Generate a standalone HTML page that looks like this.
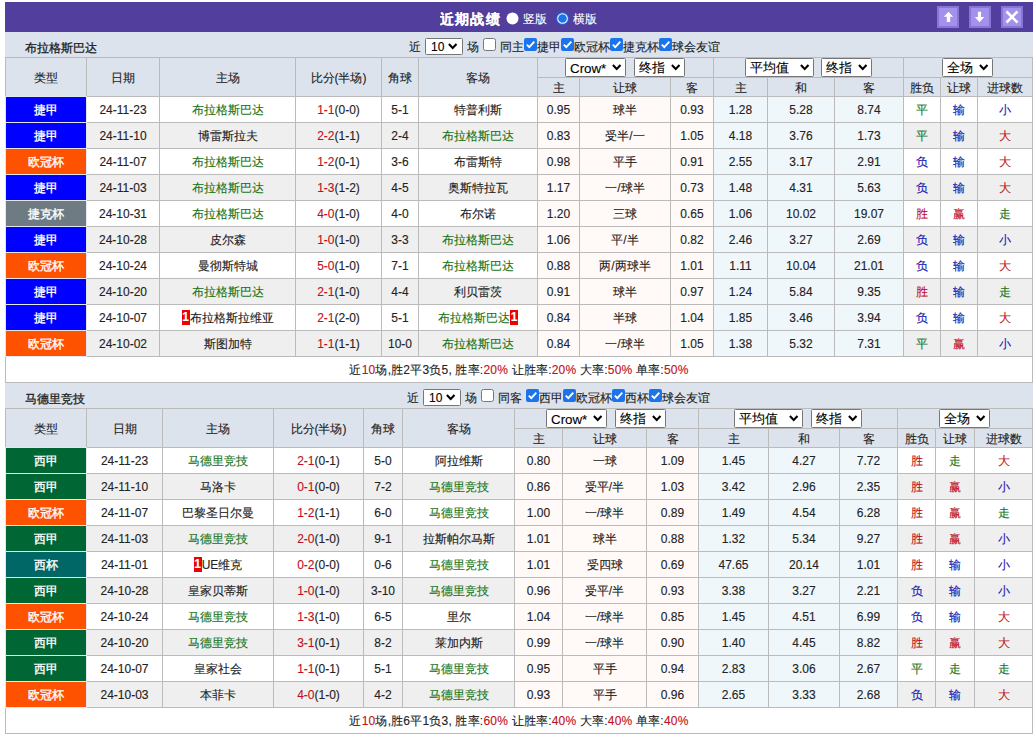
<!DOCTYPE html>
<html><head><meta charset="utf-8"><style>
html,body{margin:0;padding:0;background:#fff;width:1035px;height:734px;overflow:hidden}
body{font-family:"Liberation Sans",sans-serif;font-size:12px;position:relative;-webkit-text-stroke:0.12px}
div{position:absolute;box-sizing:border-box;white-space:nowrap;overflow:hidden}
svg{display:block}
.rc{display:inline-block;background:#e00;color:#fff;font-weight:bold;width:8px;text-align:center;line-height:15px;vertical-align:middle;position:relative;top:-1px}
</style></head><body>
<div style="left:5px;top:2px;width:1028px;height:30px;background:#523f9d"></div>
<div style="left:440px;top:4px;width:90px;height:30px;line-height:30px;font-size:14px;font-weight:bold;color:#fff;letter-spacing:1.2px">近期战绩</div>
<div style="left:506px;top:12px;width:13px;height:13px;"><svg width="13" height="13" viewBox="0 0 13 13"><circle cx="6.5" cy="6.5" r="6" fill="#fff"/></svg></div>
<div style="left:523px;top:4px;width:30px;height:30px;line-height:30px;color:#fff">竖版</div>
<div style="left:556px;top:12px;width:13px;height:13px;"><svg width="13" height="13" viewBox="0 0 13 13"><circle cx="6.5" cy="6.5" r="6.2" fill="#1c74ec"/><circle cx="6.5" cy="6.5" r="5.3" fill="#fff"/><circle cx="6.5" cy="6.5" r="4.3" fill="#1c74ec"/></svg></div>
<div style="left:573px;top:4px;width:30px;height:30px;line-height:30px;color:#fff">横版</div>
<div style="left:937px;top:6px;width:22px;height:22px;"><svg width="22" height="22" viewBox="0 0 22 22"><rect x="0" y="0" width="22" height="22" fill="#8776d6"/><rect x="2" y="2" width="18" height="18" fill="#a391ec"/><path d="M11.5 5.8 L16.2 10.8 L13.2 10.8 L13.2 16 L9.8 16 L9.8 10.8 L6.8 10.8 Z" fill="#fff"/></svg></div>
<div style="left:969px;top:6px;width:22px;height:22px;"><svg width="22" height="22" viewBox="0 0 22 22"><rect x="0" y="0" width="22" height="22" fill="#8776d6"/><rect x="2" y="2" width="18" height="18" fill="#a391ec"/><path d="M10.5 16.2 L15.3 11 L12.1 11 L12.1 5.8 L8.9 5.8 L8.9 11 L5.8 11 Z" fill="#fff"/></svg></div>
<div style="left:1001px;top:6px;width:22px;height:22px;"><svg width="22" height="22" viewBox="0 0 22 22"><rect x="0" y="0" width="22" height="22" fill="#8776d6"/><rect x="2" y="2" width="18" height="18" fill="#a391ec"/><path d="M5.5 5.5 L16.5 16.5 M16.5 5.5 L5.5 16.5" stroke="#fff" stroke-width="2.5"/></svg></div>
<div style="left:5px;top:32px;width:1028px;height:25px;background:#dce3ed"></div>
<div style="left:25px;top:36px;width:200px;height:25px;line-height:25px;font-weight:500;-webkit-text-stroke:0.3px;color:#222">布拉格斯巴达</div>
<div style="left:5px;top:383px;width:1028px;height:25px;background:#dce3ed"></div>
<div style="left:25px;top:387px;width:200px;height:25px;line-height:25px;font-weight:500;-webkit-text-stroke:0.3px;color:#222">马德里竞技</div>
<div style="left:5px;top:57px;width:1028px;height:39px;background:#dce3ed"></div>
<div style="left:5px;top:97px;width:1028px;height:25px;background:#fff"></div>
<div style="left:538px;top:97px;width:176px;height:25px;background:#fffaf7"></div>
<div style="left:714px;top:97px;width:190px;height:25px;background:#f0f7fb"></div>
<div style="left:5px;top:123px;width:1028px;height:25px;background:#efefef"></div>
<div style="left:538px;top:123px;width:176px;height:25px;background:#fffaf7"></div>
<div style="left:714px;top:123px;width:190px;height:25px;background:#f0f7fb"></div>
<div style="left:5px;top:149px;width:1028px;height:25px;background:#fff"></div>
<div style="left:538px;top:149px;width:176px;height:25px;background:#fffaf7"></div>
<div style="left:714px;top:149px;width:190px;height:25px;background:#f0f7fb"></div>
<div style="left:5px;top:175px;width:1028px;height:25px;background:#efefef"></div>
<div style="left:538px;top:175px;width:176px;height:25px;background:#fffaf7"></div>
<div style="left:714px;top:175px;width:190px;height:25px;background:#f0f7fb"></div>
<div style="left:5px;top:201px;width:1028px;height:25px;background:#fff"></div>
<div style="left:538px;top:201px;width:176px;height:25px;background:#fffaf7"></div>
<div style="left:714px;top:201px;width:190px;height:25px;background:#f0f7fb"></div>
<div style="left:5px;top:227px;width:1028px;height:25px;background:#efefef"></div>
<div style="left:538px;top:227px;width:176px;height:25px;background:#fffaf7"></div>
<div style="left:714px;top:227px;width:190px;height:25px;background:#f0f7fb"></div>
<div style="left:5px;top:253px;width:1028px;height:25px;background:#fff"></div>
<div style="left:538px;top:253px;width:176px;height:25px;background:#fffaf7"></div>
<div style="left:714px;top:253px;width:190px;height:25px;background:#f0f7fb"></div>
<div style="left:5px;top:279px;width:1028px;height:25px;background:#efefef"></div>
<div style="left:538px;top:279px;width:176px;height:25px;background:#fffaf7"></div>
<div style="left:714px;top:279px;width:190px;height:25px;background:#f0f7fb"></div>
<div style="left:5px;top:305px;width:1028px;height:25px;background:#fff"></div>
<div style="left:538px;top:305px;width:176px;height:25px;background:#fffaf7"></div>
<div style="left:714px;top:305px;width:190px;height:25px;background:#f0f7fb"></div>
<div style="left:5px;top:331px;width:1028px;height:25px;background:#efefef"></div>
<div style="left:538px;top:331px;width:176px;height:25px;background:#fffaf7"></div>
<div style="left:714px;top:331px;width:190px;height:25px;background:#f0f7fb"></div>
<div style="left:5px;top:57px;width:1028px;height:1px;background:#bbbbbb"></div>
<div style="left:537px;top:77px;width:495px;height:1px;background:#bbbbbb"></div>
<div style="left:5px;top:96px;width:1028px;height:1px;background:#bbbbbb"></div>
<div style="left:5px;top:122px;width:1028px;height:1px;background:#bbbbbb"></div>
<div style="left:5px;top:148px;width:1028px;height:1px;background:#bbbbbb"></div>
<div style="left:5px;top:174px;width:1028px;height:1px;background:#bbbbbb"></div>
<div style="left:5px;top:200px;width:1028px;height:1px;background:#bbbbbb"></div>
<div style="left:5px;top:226px;width:1028px;height:1px;background:#bbbbbb"></div>
<div style="left:5px;top:252px;width:1028px;height:1px;background:#bbbbbb"></div>
<div style="left:5px;top:278px;width:1028px;height:1px;background:#bbbbbb"></div>
<div style="left:5px;top:304px;width:1028px;height:1px;background:#bbbbbb"></div>
<div style="left:5px;top:330px;width:1028px;height:1px;background:#bbbbbb"></div>
<div style="left:5px;top:356px;width:1028px;height:1px;background:#bbbbbb"></div>
<div style="left:5px;top:382px;width:1028px;height:1px;background:#bbbbbb"></div>
<div style="left:5px;top:57px;width:1px;height:326px;background:#bbbbbb"></div>
<div style="left:86px;top:57px;width:1px;height:299px;background:#bbbbbb"></div>
<div style="left:159px;top:57px;width:1px;height:299px;background:#bbbbbb"></div>
<div style="left:295px;top:57px;width:1px;height:299px;background:#bbbbbb"></div>
<div style="left:381px;top:57px;width:1px;height:299px;background:#bbbbbb"></div>
<div style="left:418px;top:57px;width:1px;height:299px;background:#bbbbbb"></div>
<div style="left:537px;top:57px;width:1px;height:299px;background:#bbbbbb"></div>
<div style="left:579px;top:77px;width:1px;height:279px;background:#bbbbbb"></div>
<div style="left:670px;top:77px;width:1px;height:279px;background:#bbbbbb"></div>
<div style="left:713px;top:57px;width:1px;height:299px;background:#bbbbbb"></div>
<div style="left:767px;top:77px;width:1px;height:279px;background:#bbbbbb"></div>
<div style="left:834px;top:77px;width:1px;height:279px;background:#bbbbbb"></div>
<div style="left:903px;top:57px;width:1px;height:299px;background:#bbbbbb"></div>
<div style="left:940px;top:77px;width:1px;height:279px;background:#bbbbbb"></div>
<div style="left:977px;top:77px;width:1px;height:279px;background:#bbbbbb"></div>
<div style="left:1032px;top:57px;width:1px;height:326px;background:#bbbbbb"></div>
<div style="left:6px;top:97px;width:80px;height:25px;background:#0000ff"></div>
<div style="left:6px;top:98px;width:80px;height:25px;color:#fff;line-height:25px;text-align:center;-webkit-text-stroke:0.35px #fff">捷甲</div>
<div style="left:6px;top:123px;width:80px;height:25px;background:#0000ff"></div>
<div style="left:6px;top:124px;width:80px;height:25px;color:#fff;line-height:25px;text-align:center;-webkit-text-stroke:0.35px #fff">捷甲</div>
<div style="left:6px;top:149px;width:80px;height:25px;background:#ff5200"></div>
<div style="left:6px;top:150px;width:80px;height:25px;color:#fff;line-height:25px;text-align:center;-webkit-text-stroke:0.35px #fff">欧冠杯</div>
<div style="left:6px;top:175px;width:80px;height:25px;background:#0000ff"></div>
<div style="left:6px;top:176px;width:80px;height:25px;color:#fff;line-height:25px;text-align:center;-webkit-text-stroke:0.35px #fff">捷甲</div>
<div style="left:6px;top:201px;width:80px;height:25px;background:#6e7b83"></div>
<div style="left:6px;top:202px;width:80px;height:25px;color:#fff;line-height:25px;text-align:center;-webkit-text-stroke:0.35px #fff">捷克杯</div>
<div style="left:6px;top:227px;width:80px;height:25px;background:#0000ff"></div>
<div style="left:6px;top:228px;width:80px;height:25px;color:#fff;line-height:25px;text-align:center;-webkit-text-stroke:0.35px #fff">捷甲</div>
<div style="left:6px;top:253px;width:80px;height:25px;background:#ff5200"></div>
<div style="left:6px;top:254px;width:80px;height:25px;color:#fff;line-height:25px;text-align:center;-webkit-text-stroke:0.35px #fff">欧冠杯</div>
<div style="left:6px;top:279px;width:80px;height:25px;background:#0000ff"></div>
<div style="left:6px;top:280px;width:80px;height:25px;color:#fff;line-height:25px;text-align:center;-webkit-text-stroke:0.35px #fff">捷甲</div>
<div style="left:6px;top:305px;width:80px;height:25px;background:#0000ff"></div>
<div style="left:6px;top:306px;width:80px;height:25px;color:#fff;line-height:25px;text-align:center;-webkit-text-stroke:0.35px #fff">捷甲</div>
<div style="left:6px;top:331px;width:80px;height:25px;background:#ff5200"></div>
<div style="left:6px;top:332px;width:80px;height:25px;color:#fff;line-height:25px;text-align:center;-webkit-text-stroke:0.35px #fff">欧冠杯</div>
<div style="left:5px;top:96px;width:1px;height:261px;background:#e6e6ee"></div>
<div style="left:86px;top:96px;width:1px;height:261px;background:#e6e6ee"></div>
<div style="left:5px;top:96px;width:82px;height:1px;background:#e6e6ee"></div>
<div style="left:5px;top:122px;width:82px;height:1px;background:#e6e6ee"></div>
<div style="left:5px;top:148px;width:82px;height:1px;background:#e6e6ee"></div>
<div style="left:5px;top:174px;width:82px;height:1px;background:#e6e6ee"></div>
<div style="left:5px;top:200px;width:82px;height:1px;background:#e6e6ee"></div>
<div style="left:5px;top:226px;width:82px;height:1px;background:#e6e6ee"></div>
<div style="left:5px;top:252px;width:82px;height:1px;background:#e6e6ee"></div>
<div style="left:5px;top:278px;width:82px;height:1px;background:#e6e6ee"></div>
<div style="left:5px;top:304px;width:82px;height:1px;background:#e6e6ee"></div>
<div style="left:5px;top:330px;width:82px;height:1px;background:#e6e6ee"></div>
<div style="left:5px;top:356px;width:82px;height:1px;background:#e6e6ee"></div>
<div style="left:6px;top:59px;width:80px;height:38px;line-height:38px;text-align:center;color:#222">类型</div>
<div style="left:87px;top:59px;width:72px;height:38px;line-height:38px;text-align:center;color:#222">日期</div>
<div style="left:160px;top:59px;width:135px;height:38px;line-height:38px;text-align:center;color:#222">主场</div>
<div style="left:296px;top:59px;width:85px;height:38px;line-height:38px;text-align:center;color:#222">比分(半场)</div>
<div style="left:382px;top:59px;width:36px;height:38px;line-height:38px;text-align:center;color:#222">角球</div>
<div style="left:419px;top:59px;width:118px;height:38px;line-height:38px;text-align:center;color:#222">客场</div>
<div style="left:538px;top:79px;width:41px;height:18px;line-height:18px;text-align:center;color:#222">主</div>
<div style="left:580px;top:79px;width:90px;height:18px;line-height:18px;text-align:center;color:#222">让球</div>
<div style="left:671px;top:79px;width:42px;height:18px;line-height:18px;text-align:center;color:#222">客</div>
<div style="left:714px;top:79px;width:53px;height:18px;line-height:18px;text-align:center;color:#222">主</div>
<div style="left:768px;top:79px;width:66px;height:18px;line-height:18px;text-align:center;color:#222">和</div>
<div style="left:835px;top:79px;width:68px;height:18px;line-height:18px;text-align:center;color:#222">客</div>
<div style="left:904px;top:79px;width:36px;height:18px;line-height:18px;text-align:center;color:#222">胜负</div>
<div style="left:941px;top:79px;width:36px;height:18px;line-height:18px;text-align:center;color:#222">让球</div>
<div style="left:978px;top:79px;width:54px;height:18px;line-height:18px;text-align:center;color:#222">进球数</div>
<div style="left:87px;top:98px;width:72px;height:25px;line-height:25px;text-align:center;color:#222">24-11-23</div>
<div style="left:160px;top:98px;width:135px;height:25px;line-height:25px;text-align:center;color:#222"><span style="color:#187418">布拉格斯巴达</span></div>
<div style="left:296px;top:98px;width:85px;height:25px;line-height:25px;text-align:center;color:#222"><span style="color:#c0101c">1-1</span>(0-0)</div>
<div style="left:382px;top:98px;width:36px;height:25px;line-height:25px;text-align:center;color:#222">5-1</div>
<div style="left:419px;top:98px;width:118px;height:25px;line-height:25px;text-align:center;color:#222">特普利斯</div>
<div style="left:538px;top:98px;width:41px;height:25px;line-height:25px;text-align:center;color:#222">0.95</div>
<div style="left:580px;top:98px;width:90px;height:25px;line-height:25px;text-align:center;color:#222">球半</div>
<div style="left:671px;top:98px;width:42px;height:25px;line-height:25px;text-align:center;color:#222">0.93</div>
<div style="left:714px;top:98px;width:53px;height:25px;line-height:25px;text-align:center;color:#222">1.28</div>
<div style="left:768px;top:98px;width:66px;height:25px;line-height:25px;text-align:center;color:#222">5.28</div>
<div style="left:835px;top:98px;width:68px;height:25px;line-height:25px;text-align:center;color:#222">8.74</div>
<div style="left:904px;top:98px;width:36px;height:25px;line-height:25px;text-align:center;color:#222"><span style="color:#187418">平</span></div>
<div style="left:941px;top:98px;width:36px;height:25px;line-height:25px;text-align:center;color:#222"><span style="color:#1414b0">输</span></div>
<div style="left:978px;top:98px;width:54px;height:25px;line-height:25px;text-align:center;color:#222"><span style="color:#1414b0">小</span></div>
<div style="left:87px;top:124px;width:72px;height:25px;line-height:25px;text-align:center;color:#222">24-11-10</div>
<div style="left:160px;top:124px;width:135px;height:25px;line-height:25px;text-align:center;color:#222">博雷斯拉夫</div>
<div style="left:296px;top:124px;width:85px;height:25px;line-height:25px;text-align:center;color:#222"><span style="color:#c0101c">2-2</span>(1-1)</div>
<div style="left:382px;top:124px;width:36px;height:25px;line-height:25px;text-align:center;color:#222">2-4</div>
<div style="left:419px;top:124px;width:118px;height:25px;line-height:25px;text-align:center;color:#222"><span style="color:#187418">布拉格斯巴达</span></div>
<div style="left:538px;top:124px;width:41px;height:25px;line-height:25px;text-align:center;color:#222">0.83</div>
<div style="left:580px;top:124px;width:90px;height:25px;line-height:25px;text-align:center;color:#222">受半/一</div>
<div style="left:671px;top:124px;width:42px;height:25px;line-height:25px;text-align:center;color:#222">1.05</div>
<div style="left:714px;top:124px;width:53px;height:25px;line-height:25px;text-align:center;color:#222">4.18</div>
<div style="left:768px;top:124px;width:66px;height:25px;line-height:25px;text-align:center;color:#222">3.76</div>
<div style="left:835px;top:124px;width:68px;height:25px;line-height:25px;text-align:center;color:#222">1.73</div>
<div style="left:904px;top:124px;width:36px;height:25px;line-height:25px;text-align:center;color:#222"><span style="color:#187418">平</span></div>
<div style="left:941px;top:124px;width:36px;height:25px;line-height:25px;text-align:center;color:#222"><span style="color:#1414b0">输</span></div>
<div style="left:978px;top:124px;width:54px;height:25px;line-height:25px;text-align:center;color:#222"><span style="color:#c0101c">大</span></div>
<div style="left:87px;top:150px;width:72px;height:25px;line-height:25px;text-align:center;color:#222">24-11-07</div>
<div style="left:160px;top:150px;width:135px;height:25px;line-height:25px;text-align:center;color:#222"><span style="color:#187418">布拉格斯巴达</span></div>
<div style="left:296px;top:150px;width:85px;height:25px;line-height:25px;text-align:center;color:#222"><span style="color:#c0101c">1-2</span>(0-1)</div>
<div style="left:382px;top:150px;width:36px;height:25px;line-height:25px;text-align:center;color:#222">3-6</div>
<div style="left:419px;top:150px;width:118px;height:25px;line-height:25px;text-align:center;color:#222">布雷斯特</div>
<div style="left:538px;top:150px;width:41px;height:25px;line-height:25px;text-align:center;color:#222">0.98</div>
<div style="left:580px;top:150px;width:90px;height:25px;line-height:25px;text-align:center;color:#222">平手</div>
<div style="left:671px;top:150px;width:42px;height:25px;line-height:25px;text-align:center;color:#222">0.91</div>
<div style="left:714px;top:150px;width:53px;height:25px;line-height:25px;text-align:center;color:#222">2.55</div>
<div style="left:768px;top:150px;width:66px;height:25px;line-height:25px;text-align:center;color:#222">3.17</div>
<div style="left:835px;top:150px;width:68px;height:25px;line-height:25px;text-align:center;color:#222">2.91</div>
<div style="left:904px;top:150px;width:36px;height:25px;line-height:25px;text-align:center;color:#222"><span style="color:#1414b0">负</span></div>
<div style="left:941px;top:150px;width:36px;height:25px;line-height:25px;text-align:center;color:#222"><span style="color:#1414b0">输</span></div>
<div style="left:978px;top:150px;width:54px;height:25px;line-height:25px;text-align:center;color:#222"><span style="color:#c0101c">大</span></div>
<div style="left:87px;top:176px;width:72px;height:25px;line-height:25px;text-align:center;color:#222">24-11-03</div>
<div style="left:160px;top:176px;width:135px;height:25px;line-height:25px;text-align:center;color:#222"><span style="color:#187418">布拉格斯巴达</span></div>
<div style="left:296px;top:176px;width:85px;height:25px;line-height:25px;text-align:center;color:#222"><span style="color:#c0101c">1-3</span>(1-2)</div>
<div style="left:382px;top:176px;width:36px;height:25px;line-height:25px;text-align:center;color:#222">4-5</div>
<div style="left:419px;top:176px;width:118px;height:25px;line-height:25px;text-align:center;color:#222">奥斯特拉瓦</div>
<div style="left:538px;top:176px;width:41px;height:25px;line-height:25px;text-align:center;color:#222">1.17</div>
<div style="left:580px;top:176px;width:90px;height:25px;line-height:25px;text-align:center;color:#222">一/球半</div>
<div style="left:671px;top:176px;width:42px;height:25px;line-height:25px;text-align:center;color:#222">0.73</div>
<div style="left:714px;top:176px;width:53px;height:25px;line-height:25px;text-align:center;color:#222">1.48</div>
<div style="left:768px;top:176px;width:66px;height:25px;line-height:25px;text-align:center;color:#222">4.31</div>
<div style="left:835px;top:176px;width:68px;height:25px;line-height:25px;text-align:center;color:#222">5.63</div>
<div style="left:904px;top:176px;width:36px;height:25px;line-height:25px;text-align:center;color:#222"><span style="color:#1414b0">负</span></div>
<div style="left:941px;top:176px;width:36px;height:25px;line-height:25px;text-align:center;color:#222"><span style="color:#1414b0">输</span></div>
<div style="left:978px;top:176px;width:54px;height:25px;line-height:25px;text-align:center;color:#222"><span style="color:#c0101c">大</span></div>
<div style="left:87px;top:202px;width:72px;height:25px;line-height:25px;text-align:center;color:#222">24-10-31</div>
<div style="left:160px;top:202px;width:135px;height:25px;line-height:25px;text-align:center;color:#222"><span style="color:#187418">布拉格斯巴达</span></div>
<div style="left:296px;top:202px;width:85px;height:25px;line-height:25px;text-align:center;color:#222"><span style="color:#c0101c">4-0</span>(1-0)</div>
<div style="left:382px;top:202px;width:36px;height:25px;line-height:25px;text-align:center;color:#222">4-0</div>
<div style="left:419px;top:202px;width:118px;height:25px;line-height:25px;text-align:center;color:#222">布尔诺</div>
<div style="left:538px;top:202px;width:41px;height:25px;line-height:25px;text-align:center;color:#222">1.20</div>
<div style="left:580px;top:202px;width:90px;height:25px;line-height:25px;text-align:center;color:#222">三球</div>
<div style="left:671px;top:202px;width:42px;height:25px;line-height:25px;text-align:center;color:#222">0.65</div>
<div style="left:714px;top:202px;width:53px;height:25px;line-height:25px;text-align:center;color:#222">1.06</div>
<div style="left:768px;top:202px;width:66px;height:25px;line-height:25px;text-align:center;color:#222">10.02</div>
<div style="left:835px;top:202px;width:68px;height:25px;line-height:25px;text-align:center;color:#222">19.07</div>
<div style="left:904px;top:202px;width:36px;height:25px;line-height:25px;text-align:center;color:#222"><span style="color:#c0101c">胜</span></div>
<div style="left:941px;top:202px;width:36px;height:25px;line-height:25px;text-align:center;color:#222"><span style="color:#c0101c">赢</span></div>
<div style="left:978px;top:202px;width:54px;height:25px;line-height:25px;text-align:center;color:#222"><span style="color:#187418">走</span></div>
<div style="left:87px;top:228px;width:72px;height:25px;line-height:25px;text-align:center;color:#222">24-10-28</div>
<div style="left:160px;top:228px;width:135px;height:25px;line-height:25px;text-align:center;color:#222">皮尔森</div>
<div style="left:296px;top:228px;width:85px;height:25px;line-height:25px;text-align:center;color:#222"><span style="color:#c0101c">1-0</span>(1-0)</div>
<div style="left:382px;top:228px;width:36px;height:25px;line-height:25px;text-align:center;color:#222">3-3</div>
<div style="left:419px;top:228px;width:118px;height:25px;line-height:25px;text-align:center;color:#222"><span style="color:#187418">布拉格斯巴达</span></div>
<div style="left:538px;top:228px;width:41px;height:25px;line-height:25px;text-align:center;color:#222">1.06</div>
<div style="left:580px;top:228px;width:90px;height:25px;line-height:25px;text-align:center;color:#222">平/半</div>
<div style="left:671px;top:228px;width:42px;height:25px;line-height:25px;text-align:center;color:#222">0.82</div>
<div style="left:714px;top:228px;width:53px;height:25px;line-height:25px;text-align:center;color:#222">2.46</div>
<div style="left:768px;top:228px;width:66px;height:25px;line-height:25px;text-align:center;color:#222">3.27</div>
<div style="left:835px;top:228px;width:68px;height:25px;line-height:25px;text-align:center;color:#222">2.69</div>
<div style="left:904px;top:228px;width:36px;height:25px;line-height:25px;text-align:center;color:#222"><span style="color:#1414b0">负</span></div>
<div style="left:941px;top:228px;width:36px;height:25px;line-height:25px;text-align:center;color:#222"><span style="color:#1414b0">输</span></div>
<div style="left:978px;top:228px;width:54px;height:25px;line-height:25px;text-align:center;color:#222"><span style="color:#1414b0">小</span></div>
<div style="left:87px;top:254px;width:72px;height:25px;line-height:25px;text-align:center;color:#222">24-10-24</div>
<div style="left:160px;top:254px;width:135px;height:25px;line-height:25px;text-align:center;color:#222">曼彻斯特城</div>
<div style="left:296px;top:254px;width:85px;height:25px;line-height:25px;text-align:center;color:#222"><span style="color:#c0101c">5-0</span>(1-0)</div>
<div style="left:382px;top:254px;width:36px;height:25px;line-height:25px;text-align:center;color:#222">7-1</div>
<div style="left:419px;top:254px;width:118px;height:25px;line-height:25px;text-align:center;color:#222"><span style="color:#187418">布拉格斯巴达</span></div>
<div style="left:538px;top:254px;width:41px;height:25px;line-height:25px;text-align:center;color:#222">0.88</div>
<div style="left:580px;top:254px;width:90px;height:25px;line-height:25px;text-align:center;color:#222">两/两球半</div>
<div style="left:671px;top:254px;width:42px;height:25px;line-height:25px;text-align:center;color:#222">1.01</div>
<div style="left:714px;top:254px;width:53px;height:25px;line-height:25px;text-align:center;color:#222">1.11</div>
<div style="left:768px;top:254px;width:66px;height:25px;line-height:25px;text-align:center;color:#222">10.04</div>
<div style="left:835px;top:254px;width:68px;height:25px;line-height:25px;text-align:center;color:#222">21.01</div>
<div style="left:904px;top:254px;width:36px;height:25px;line-height:25px;text-align:center;color:#222"><span style="color:#1414b0">负</span></div>
<div style="left:941px;top:254px;width:36px;height:25px;line-height:25px;text-align:center;color:#222"><span style="color:#1414b0">输</span></div>
<div style="left:978px;top:254px;width:54px;height:25px;line-height:25px;text-align:center;color:#222"><span style="color:#c0101c">大</span></div>
<div style="left:87px;top:280px;width:72px;height:25px;line-height:25px;text-align:center;color:#222">24-10-20</div>
<div style="left:160px;top:280px;width:135px;height:25px;line-height:25px;text-align:center;color:#222"><span style="color:#187418">布拉格斯巴达</span></div>
<div style="left:296px;top:280px;width:85px;height:25px;line-height:25px;text-align:center;color:#222"><span style="color:#c0101c">2-1</span>(1-0)</div>
<div style="left:382px;top:280px;width:36px;height:25px;line-height:25px;text-align:center;color:#222">4-4</div>
<div style="left:419px;top:280px;width:118px;height:25px;line-height:25px;text-align:center;color:#222">利贝雷茨</div>
<div style="left:538px;top:280px;width:41px;height:25px;line-height:25px;text-align:center;color:#222">0.91</div>
<div style="left:580px;top:280px;width:90px;height:25px;line-height:25px;text-align:center;color:#222">球半</div>
<div style="left:671px;top:280px;width:42px;height:25px;line-height:25px;text-align:center;color:#222">0.97</div>
<div style="left:714px;top:280px;width:53px;height:25px;line-height:25px;text-align:center;color:#222">1.24</div>
<div style="left:768px;top:280px;width:66px;height:25px;line-height:25px;text-align:center;color:#222">5.84</div>
<div style="left:835px;top:280px;width:68px;height:25px;line-height:25px;text-align:center;color:#222">9.35</div>
<div style="left:904px;top:280px;width:36px;height:25px;line-height:25px;text-align:center;color:#222"><span style="color:#c0101c">胜</span></div>
<div style="left:941px;top:280px;width:36px;height:25px;line-height:25px;text-align:center;color:#222"><span style="color:#1414b0">输</span></div>
<div style="left:978px;top:280px;width:54px;height:25px;line-height:25px;text-align:center;color:#222"><span style="color:#187418">走</span></div>
<div style="left:87px;top:306px;width:72px;height:25px;line-height:25px;text-align:center;color:#222">24-10-07</div>
<div style="left:160px;top:306px;width:135px;height:25px;line-height:25px;text-align:center;color:#222"><span class="rc">1</span>布拉格斯拉维亚</div>
<div style="left:296px;top:306px;width:85px;height:25px;line-height:25px;text-align:center;color:#222"><span style="color:#c0101c">2-1</span>(2-0)</div>
<div style="left:382px;top:306px;width:36px;height:25px;line-height:25px;text-align:center;color:#222">5-1</div>
<div style="left:419px;top:306px;width:118px;height:25px;line-height:25px;text-align:center;color:#222"><span style="color:#187418">布拉格斯巴达</span><span class="rc">1</span></div>
<div style="left:538px;top:306px;width:41px;height:25px;line-height:25px;text-align:center;color:#222">0.84</div>
<div style="left:580px;top:306px;width:90px;height:25px;line-height:25px;text-align:center;color:#222">半球</div>
<div style="left:671px;top:306px;width:42px;height:25px;line-height:25px;text-align:center;color:#222">1.04</div>
<div style="left:714px;top:306px;width:53px;height:25px;line-height:25px;text-align:center;color:#222">1.85</div>
<div style="left:768px;top:306px;width:66px;height:25px;line-height:25px;text-align:center;color:#222">3.46</div>
<div style="left:835px;top:306px;width:68px;height:25px;line-height:25px;text-align:center;color:#222">3.94</div>
<div style="left:904px;top:306px;width:36px;height:25px;line-height:25px;text-align:center;color:#222"><span style="color:#1414b0">负</span></div>
<div style="left:941px;top:306px;width:36px;height:25px;line-height:25px;text-align:center;color:#222"><span style="color:#1414b0">输</span></div>
<div style="left:978px;top:306px;width:54px;height:25px;line-height:25px;text-align:center;color:#222"><span style="color:#c0101c">大</span></div>
<div style="left:87px;top:332px;width:72px;height:25px;line-height:25px;text-align:center;color:#222">24-10-02</div>
<div style="left:160px;top:332px;width:135px;height:25px;line-height:25px;text-align:center;color:#222">斯图加特</div>
<div style="left:296px;top:332px;width:85px;height:25px;line-height:25px;text-align:center;color:#222"><span style="color:#c0101c">1-1</span>(1-1)</div>
<div style="left:382px;top:332px;width:36px;height:25px;line-height:25px;text-align:center;color:#222">10-0</div>
<div style="left:419px;top:332px;width:118px;height:25px;line-height:25px;text-align:center;color:#222"><span style="color:#187418">布拉格斯巴达</span></div>
<div style="left:538px;top:332px;width:41px;height:25px;line-height:25px;text-align:center;color:#222">0.84</div>
<div style="left:580px;top:332px;width:90px;height:25px;line-height:25px;text-align:center;color:#222">一/球半</div>
<div style="left:671px;top:332px;width:42px;height:25px;line-height:25px;text-align:center;color:#222">1.05</div>
<div style="left:714px;top:332px;width:53px;height:25px;line-height:25px;text-align:center;color:#222">1.38</div>
<div style="left:768px;top:332px;width:66px;height:25px;line-height:25px;text-align:center;color:#222">5.32</div>
<div style="left:835px;top:332px;width:68px;height:25px;line-height:25px;text-align:center;color:#222">7.31</div>
<div style="left:904px;top:332px;width:36px;height:25px;line-height:25px;text-align:center;color:#222"><span style="color:#187418">平</span></div>
<div style="left:941px;top:332px;width:36px;height:25px;line-height:25px;text-align:center;color:#222"><span style="color:#c0101c">赢</span></div>
<div style="left:978px;top:332px;width:54px;height:25px;line-height:25px;text-align:center;color:#222"><span style="color:#1414b0">小</span></div>
<div style="left:6px;top:358px;width:1026px;height:25px;line-height:25px;text-align:center;color:#222;letter-spacing:0.2px">近<span style="color:#c0101c">10</span>场,胜2平3负5, 胜率:<span style="color:#c0101c">20%</span> 让胜率:<span style="color:#c0101c">20%</span> 大率:<span style="color:#c0101c">50%</span> 单率:<span style="color:#c0101c">50%</span></div>
<div style="left:5px;top:408px;width:1028px;height:39px;background:#dce3ed"></div>
<div style="left:5px;top:448px;width:1028px;height:25px;background:#fff"></div>
<div style="left:515px;top:448px;width:184px;height:25px;background:#fffaf7"></div>
<div style="left:699px;top:448px;width:199px;height:25px;background:#f0f7fb"></div>
<div style="left:5px;top:474px;width:1028px;height:25px;background:#efefef"></div>
<div style="left:515px;top:474px;width:184px;height:25px;background:#fffaf7"></div>
<div style="left:699px;top:474px;width:199px;height:25px;background:#f0f7fb"></div>
<div style="left:5px;top:500px;width:1028px;height:25px;background:#fff"></div>
<div style="left:515px;top:500px;width:184px;height:25px;background:#fffaf7"></div>
<div style="left:699px;top:500px;width:199px;height:25px;background:#f0f7fb"></div>
<div style="left:5px;top:526px;width:1028px;height:25px;background:#efefef"></div>
<div style="left:515px;top:526px;width:184px;height:25px;background:#fffaf7"></div>
<div style="left:699px;top:526px;width:199px;height:25px;background:#f0f7fb"></div>
<div style="left:5px;top:552px;width:1028px;height:25px;background:#fff"></div>
<div style="left:515px;top:552px;width:184px;height:25px;background:#fffaf7"></div>
<div style="left:699px;top:552px;width:199px;height:25px;background:#f0f7fb"></div>
<div style="left:5px;top:578px;width:1028px;height:25px;background:#efefef"></div>
<div style="left:515px;top:578px;width:184px;height:25px;background:#fffaf7"></div>
<div style="left:699px;top:578px;width:199px;height:25px;background:#f0f7fb"></div>
<div style="left:5px;top:604px;width:1028px;height:25px;background:#fff"></div>
<div style="left:515px;top:604px;width:184px;height:25px;background:#fffaf7"></div>
<div style="left:699px;top:604px;width:199px;height:25px;background:#f0f7fb"></div>
<div style="left:5px;top:630px;width:1028px;height:25px;background:#efefef"></div>
<div style="left:515px;top:630px;width:184px;height:25px;background:#fffaf7"></div>
<div style="left:699px;top:630px;width:199px;height:25px;background:#f0f7fb"></div>
<div style="left:5px;top:656px;width:1028px;height:25px;background:#fff"></div>
<div style="left:515px;top:656px;width:184px;height:25px;background:#fffaf7"></div>
<div style="left:699px;top:656px;width:199px;height:25px;background:#f0f7fb"></div>
<div style="left:5px;top:682px;width:1028px;height:25px;background:#efefef"></div>
<div style="left:515px;top:682px;width:184px;height:25px;background:#fffaf7"></div>
<div style="left:699px;top:682px;width:199px;height:25px;background:#f0f7fb"></div>
<div style="left:5px;top:408px;width:1028px;height:1px;background:#bbbbbb"></div>
<div style="left:514px;top:428px;width:518px;height:1px;background:#bbbbbb"></div>
<div style="left:5px;top:447px;width:1028px;height:1px;background:#bbbbbb"></div>
<div style="left:5px;top:473px;width:1028px;height:1px;background:#bbbbbb"></div>
<div style="left:5px;top:499px;width:1028px;height:1px;background:#bbbbbb"></div>
<div style="left:5px;top:525px;width:1028px;height:1px;background:#bbbbbb"></div>
<div style="left:5px;top:551px;width:1028px;height:1px;background:#bbbbbb"></div>
<div style="left:5px;top:577px;width:1028px;height:1px;background:#bbbbbb"></div>
<div style="left:5px;top:603px;width:1028px;height:1px;background:#bbbbbb"></div>
<div style="left:5px;top:629px;width:1028px;height:1px;background:#bbbbbb"></div>
<div style="left:5px;top:655px;width:1028px;height:1px;background:#bbbbbb"></div>
<div style="left:5px;top:681px;width:1028px;height:1px;background:#bbbbbb"></div>
<div style="left:5px;top:707px;width:1028px;height:1px;background:#bbbbbb"></div>
<div style="left:5px;top:733px;width:1028px;height:1px;background:#bbbbbb"></div>
<div style="left:5px;top:408px;width:1px;height:326px;background:#bbbbbb"></div>
<div style="left:86px;top:408px;width:1px;height:299px;background:#bbbbbb"></div>
<div style="left:162px;top:408px;width:1px;height:299px;background:#bbbbbb"></div>
<div style="left:273px;top:408px;width:1px;height:299px;background:#bbbbbb"></div>
<div style="left:363px;top:408px;width:1px;height:299px;background:#bbbbbb"></div>
<div style="left:402px;top:408px;width:1px;height:299px;background:#bbbbbb"></div>
<div style="left:514px;top:408px;width:1px;height:299px;background:#bbbbbb"></div>
<div style="left:562px;top:428px;width:1px;height:279px;background:#bbbbbb"></div>
<div style="left:646px;top:428px;width:1px;height:279px;background:#bbbbbb"></div>
<div style="left:698px;top:408px;width:1px;height:299px;background:#bbbbbb"></div>
<div style="left:768px;top:428px;width:1px;height:279px;background:#bbbbbb"></div>
<div style="left:839px;top:428px;width:1px;height:279px;background:#bbbbbb"></div>
<div style="left:897px;top:408px;width:1px;height:299px;background:#bbbbbb"></div>
<div style="left:935px;top:428px;width:1px;height:279px;background:#bbbbbb"></div>
<div style="left:974px;top:428px;width:1px;height:279px;background:#bbbbbb"></div>
<div style="left:1032px;top:408px;width:1px;height:326px;background:#bbbbbb"></div>
<div style="left:6px;top:448px;width:80px;height:25px;background:#006633"></div>
<div style="left:6px;top:449px;width:80px;height:25px;color:#fff;line-height:25px;text-align:center;-webkit-text-stroke:0.35px #fff">西甲</div>
<div style="left:6px;top:474px;width:80px;height:25px;background:#006633"></div>
<div style="left:6px;top:475px;width:80px;height:25px;color:#fff;line-height:25px;text-align:center;-webkit-text-stroke:0.35px #fff">西甲</div>
<div style="left:6px;top:500px;width:80px;height:25px;background:#ff5200"></div>
<div style="left:6px;top:501px;width:80px;height:25px;color:#fff;line-height:25px;text-align:center;-webkit-text-stroke:0.35px #fff">欧冠杯</div>
<div style="left:6px;top:526px;width:80px;height:25px;background:#006633"></div>
<div style="left:6px;top:527px;width:80px;height:25px;color:#fff;line-height:25px;text-align:center;-webkit-text-stroke:0.35px #fff">西甲</div>
<div style="left:6px;top:552px;width:80px;height:25px;background:#006666"></div>
<div style="left:6px;top:553px;width:80px;height:25px;color:#fff;line-height:25px;text-align:center;-webkit-text-stroke:0.35px #fff">西杯</div>
<div style="left:6px;top:578px;width:80px;height:25px;background:#006633"></div>
<div style="left:6px;top:579px;width:80px;height:25px;color:#fff;line-height:25px;text-align:center;-webkit-text-stroke:0.35px #fff">西甲</div>
<div style="left:6px;top:604px;width:80px;height:25px;background:#ff5200"></div>
<div style="left:6px;top:605px;width:80px;height:25px;color:#fff;line-height:25px;text-align:center;-webkit-text-stroke:0.35px #fff">欧冠杯</div>
<div style="left:6px;top:630px;width:80px;height:25px;background:#006633"></div>
<div style="left:6px;top:631px;width:80px;height:25px;color:#fff;line-height:25px;text-align:center;-webkit-text-stroke:0.35px #fff">西甲</div>
<div style="left:6px;top:656px;width:80px;height:25px;background:#006633"></div>
<div style="left:6px;top:657px;width:80px;height:25px;color:#fff;line-height:25px;text-align:center;-webkit-text-stroke:0.35px #fff">西甲</div>
<div style="left:6px;top:682px;width:80px;height:25px;background:#ff5200"></div>
<div style="left:6px;top:683px;width:80px;height:25px;color:#fff;line-height:25px;text-align:center;-webkit-text-stroke:0.35px #fff">欧冠杯</div>
<div style="left:5px;top:447px;width:1px;height:261px;background:#e6e6ee"></div>
<div style="left:86px;top:447px;width:1px;height:261px;background:#e6e6ee"></div>
<div style="left:5px;top:447px;width:82px;height:1px;background:#e6e6ee"></div>
<div style="left:5px;top:473px;width:82px;height:1px;background:#e6e6ee"></div>
<div style="left:5px;top:499px;width:82px;height:1px;background:#e6e6ee"></div>
<div style="left:5px;top:525px;width:82px;height:1px;background:#e6e6ee"></div>
<div style="left:5px;top:551px;width:82px;height:1px;background:#e6e6ee"></div>
<div style="left:5px;top:577px;width:82px;height:1px;background:#e6e6ee"></div>
<div style="left:5px;top:603px;width:82px;height:1px;background:#e6e6ee"></div>
<div style="left:5px;top:629px;width:82px;height:1px;background:#e6e6ee"></div>
<div style="left:5px;top:655px;width:82px;height:1px;background:#e6e6ee"></div>
<div style="left:5px;top:681px;width:82px;height:1px;background:#e6e6ee"></div>
<div style="left:5px;top:707px;width:82px;height:1px;background:#e6e6ee"></div>
<div style="left:6px;top:410px;width:80px;height:38px;line-height:38px;text-align:center;color:#222">类型</div>
<div style="left:87px;top:410px;width:75px;height:38px;line-height:38px;text-align:center;color:#222">日期</div>
<div style="left:163px;top:410px;width:110px;height:38px;line-height:38px;text-align:center;color:#222">主场</div>
<div style="left:274px;top:410px;width:89px;height:38px;line-height:38px;text-align:center;color:#222">比分(半场)</div>
<div style="left:364px;top:410px;width:38px;height:38px;line-height:38px;text-align:center;color:#222">角球</div>
<div style="left:403px;top:410px;width:111px;height:38px;line-height:38px;text-align:center;color:#222">客场</div>
<div style="left:515px;top:430px;width:47px;height:18px;line-height:18px;text-align:center;color:#222">主</div>
<div style="left:563px;top:430px;width:83px;height:18px;line-height:18px;text-align:center;color:#222">让球</div>
<div style="left:647px;top:430px;width:51px;height:18px;line-height:18px;text-align:center;color:#222">客</div>
<div style="left:699px;top:430px;width:69px;height:18px;line-height:18px;text-align:center;color:#222">主</div>
<div style="left:769px;top:430px;width:70px;height:18px;line-height:18px;text-align:center;color:#222">和</div>
<div style="left:840px;top:430px;width:57px;height:18px;line-height:18px;text-align:center;color:#222">客</div>
<div style="left:898px;top:430px;width:37px;height:18px;line-height:18px;text-align:center;color:#222">胜负</div>
<div style="left:936px;top:430px;width:38px;height:18px;line-height:18px;text-align:center;color:#222">让球</div>
<div style="left:975px;top:430px;width:57px;height:18px;line-height:18px;text-align:center;color:#222">进球数</div>
<div style="left:87px;top:449px;width:75px;height:25px;line-height:25px;text-align:center;color:#222">24-11-23</div>
<div style="left:163px;top:449px;width:110px;height:25px;line-height:25px;text-align:center;color:#222"><span style="color:#187418">马德里竞技</span></div>
<div style="left:274px;top:449px;width:89px;height:25px;line-height:25px;text-align:center;color:#222"><span style="color:#c0101c">2-1</span>(0-1)</div>
<div style="left:364px;top:449px;width:38px;height:25px;line-height:25px;text-align:center;color:#222">5-0</div>
<div style="left:403px;top:449px;width:111px;height:25px;line-height:25px;text-align:center;color:#222">阿拉维斯</div>
<div style="left:515px;top:449px;width:47px;height:25px;line-height:25px;text-align:center;color:#222">0.80</div>
<div style="left:563px;top:449px;width:83px;height:25px;line-height:25px;text-align:center;color:#222">一球</div>
<div style="left:647px;top:449px;width:51px;height:25px;line-height:25px;text-align:center;color:#222">1.09</div>
<div style="left:699px;top:449px;width:69px;height:25px;line-height:25px;text-align:center;color:#222">1.45</div>
<div style="left:769px;top:449px;width:70px;height:25px;line-height:25px;text-align:center;color:#222">4.27</div>
<div style="left:840px;top:449px;width:57px;height:25px;line-height:25px;text-align:center;color:#222">7.72</div>
<div style="left:898px;top:449px;width:37px;height:25px;line-height:25px;text-align:center;color:#222"><span style="color:#c0101c">胜</span></div>
<div style="left:936px;top:449px;width:38px;height:25px;line-height:25px;text-align:center;color:#222"><span style="color:#187418">走</span></div>
<div style="left:975px;top:449px;width:57px;height:25px;line-height:25px;text-align:center;color:#222"><span style="color:#c0101c">大</span></div>
<div style="left:87px;top:475px;width:75px;height:25px;line-height:25px;text-align:center;color:#222">24-11-10</div>
<div style="left:163px;top:475px;width:110px;height:25px;line-height:25px;text-align:center;color:#222">马洛卡</div>
<div style="left:274px;top:475px;width:89px;height:25px;line-height:25px;text-align:center;color:#222"><span style="color:#c0101c">0-1</span>(0-0)</div>
<div style="left:364px;top:475px;width:38px;height:25px;line-height:25px;text-align:center;color:#222">7-2</div>
<div style="left:403px;top:475px;width:111px;height:25px;line-height:25px;text-align:center;color:#222"><span style="color:#187418">马德里竞技</span></div>
<div style="left:515px;top:475px;width:47px;height:25px;line-height:25px;text-align:center;color:#222">0.86</div>
<div style="left:563px;top:475px;width:83px;height:25px;line-height:25px;text-align:center;color:#222">受平/半</div>
<div style="left:647px;top:475px;width:51px;height:25px;line-height:25px;text-align:center;color:#222">1.03</div>
<div style="left:699px;top:475px;width:69px;height:25px;line-height:25px;text-align:center;color:#222">3.42</div>
<div style="left:769px;top:475px;width:70px;height:25px;line-height:25px;text-align:center;color:#222">2.96</div>
<div style="left:840px;top:475px;width:57px;height:25px;line-height:25px;text-align:center;color:#222">2.35</div>
<div style="left:898px;top:475px;width:37px;height:25px;line-height:25px;text-align:center;color:#222"><span style="color:#c0101c">胜</span></div>
<div style="left:936px;top:475px;width:38px;height:25px;line-height:25px;text-align:center;color:#222"><span style="color:#c0101c">赢</span></div>
<div style="left:975px;top:475px;width:57px;height:25px;line-height:25px;text-align:center;color:#222"><span style="color:#1414b0">小</span></div>
<div style="left:87px;top:501px;width:75px;height:25px;line-height:25px;text-align:center;color:#222">24-11-07</div>
<div style="left:163px;top:501px;width:110px;height:25px;line-height:25px;text-align:center;color:#222">巴黎圣日尔曼</div>
<div style="left:274px;top:501px;width:89px;height:25px;line-height:25px;text-align:center;color:#222"><span style="color:#c0101c">1-2</span>(1-1)</div>
<div style="left:364px;top:501px;width:38px;height:25px;line-height:25px;text-align:center;color:#222">6-0</div>
<div style="left:403px;top:501px;width:111px;height:25px;line-height:25px;text-align:center;color:#222"><span style="color:#187418">马德里竞技</span></div>
<div style="left:515px;top:501px;width:47px;height:25px;line-height:25px;text-align:center;color:#222">1.00</div>
<div style="left:563px;top:501px;width:83px;height:25px;line-height:25px;text-align:center;color:#222">一/球半</div>
<div style="left:647px;top:501px;width:51px;height:25px;line-height:25px;text-align:center;color:#222">0.89</div>
<div style="left:699px;top:501px;width:69px;height:25px;line-height:25px;text-align:center;color:#222">1.49</div>
<div style="left:769px;top:501px;width:70px;height:25px;line-height:25px;text-align:center;color:#222">4.54</div>
<div style="left:840px;top:501px;width:57px;height:25px;line-height:25px;text-align:center;color:#222">6.28</div>
<div style="left:898px;top:501px;width:37px;height:25px;line-height:25px;text-align:center;color:#222"><span style="color:#c0101c">胜</span></div>
<div style="left:936px;top:501px;width:38px;height:25px;line-height:25px;text-align:center;color:#222"><span style="color:#c0101c">赢</span></div>
<div style="left:975px;top:501px;width:57px;height:25px;line-height:25px;text-align:center;color:#222"><span style="color:#187418">走</span></div>
<div style="left:87px;top:527px;width:75px;height:25px;line-height:25px;text-align:center;color:#222">24-11-03</div>
<div style="left:163px;top:527px;width:110px;height:25px;line-height:25px;text-align:center;color:#222"><span style="color:#187418">马德里竞技</span></div>
<div style="left:274px;top:527px;width:89px;height:25px;line-height:25px;text-align:center;color:#222"><span style="color:#c0101c">2-0</span>(1-0)</div>
<div style="left:364px;top:527px;width:38px;height:25px;line-height:25px;text-align:center;color:#222">9-1</div>
<div style="left:403px;top:527px;width:111px;height:25px;line-height:25px;text-align:center;color:#222">拉斯帕尔马斯</div>
<div style="left:515px;top:527px;width:47px;height:25px;line-height:25px;text-align:center;color:#222">1.01</div>
<div style="left:563px;top:527px;width:83px;height:25px;line-height:25px;text-align:center;color:#222">球半</div>
<div style="left:647px;top:527px;width:51px;height:25px;line-height:25px;text-align:center;color:#222">0.88</div>
<div style="left:699px;top:527px;width:69px;height:25px;line-height:25px;text-align:center;color:#222">1.32</div>
<div style="left:769px;top:527px;width:70px;height:25px;line-height:25px;text-align:center;color:#222">5.34</div>
<div style="left:840px;top:527px;width:57px;height:25px;line-height:25px;text-align:center;color:#222">9.27</div>
<div style="left:898px;top:527px;width:37px;height:25px;line-height:25px;text-align:center;color:#222"><span style="color:#c0101c">胜</span></div>
<div style="left:936px;top:527px;width:38px;height:25px;line-height:25px;text-align:center;color:#222"><span style="color:#c0101c">赢</span></div>
<div style="left:975px;top:527px;width:57px;height:25px;line-height:25px;text-align:center;color:#222"><span style="color:#1414b0">小</span></div>
<div style="left:87px;top:553px;width:75px;height:25px;line-height:25px;text-align:center;color:#222">24-11-01</div>
<div style="left:163px;top:553px;width:110px;height:25px;line-height:25px;text-align:center;color:#222"><span class="rc">1</span>UE维克</div>
<div style="left:274px;top:553px;width:89px;height:25px;line-height:25px;text-align:center;color:#222"><span style="color:#c0101c">0-2</span>(0-0)</div>
<div style="left:364px;top:553px;width:38px;height:25px;line-height:25px;text-align:center;color:#222">0-6</div>
<div style="left:403px;top:553px;width:111px;height:25px;line-height:25px;text-align:center;color:#222"><span style="color:#187418">马德里竞技</span></div>
<div style="left:515px;top:553px;width:47px;height:25px;line-height:25px;text-align:center;color:#222">1.01</div>
<div style="left:563px;top:553px;width:83px;height:25px;line-height:25px;text-align:center;color:#222">受四球</div>
<div style="left:647px;top:553px;width:51px;height:25px;line-height:25px;text-align:center;color:#222">0.69</div>
<div style="left:699px;top:553px;width:69px;height:25px;line-height:25px;text-align:center;color:#222">47.65</div>
<div style="left:769px;top:553px;width:70px;height:25px;line-height:25px;text-align:center;color:#222">20.14</div>
<div style="left:840px;top:553px;width:57px;height:25px;line-height:25px;text-align:center;color:#222">1.01</div>
<div style="left:898px;top:553px;width:37px;height:25px;line-height:25px;text-align:center;color:#222"><span style="color:#c0101c">胜</span></div>
<div style="left:936px;top:553px;width:38px;height:25px;line-height:25px;text-align:center;color:#222"><span style="color:#1414b0">输</span></div>
<div style="left:975px;top:553px;width:57px;height:25px;line-height:25px;text-align:center;color:#222"><span style="color:#1414b0">小</span></div>
<div style="left:87px;top:579px;width:75px;height:25px;line-height:25px;text-align:center;color:#222">24-10-28</div>
<div style="left:163px;top:579px;width:110px;height:25px;line-height:25px;text-align:center;color:#222">皇家贝蒂斯</div>
<div style="left:274px;top:579px;width:89px;height:25px;line-height:25px;text-align:center;color:#222"><span style="color:#c0101c">1-0</span>(1-0)</div>
<div style="left:364px;top:579px;width:38px;height:25px;line-height:25px;text-align:center;color:#222">3-10</div>
<div style="left:403px;top:579px;width:111px;height:25px;line-height:25px;text-align:center;color:#222"><span style="color:#187418">马德里竞技</span></div>
<div style="left:515px;top:579px;width:47px;height:25px;line-height:25px;text-align:center;color:#222">0.96</div>
<div style="left:563px;top:579px;width:83px;height:25px;line-height:25px;text-align:center;color:#222">受平/半</div>
<div style="left:647px;top:579px;width:51px;height:25px;line-height:25px;text-align:center;color:#222">0.93</div>
<div style="left:699px;top:579px;width:69px;height:25px;line-height:25px;text-align:center;color:#222">3.38</div>
<div style="left:769px;top:579px;width:70px;height:25px;line-height:25px;text-align:center;color:#222">3.27</div>
<div style="left:840px;top:579px;width:57px;height:25px;line-height:25px;text-align:center;color:#222">2.21</div>
<div style="left:898px;top:579px;width:37px;height:25px;line-height:25px;text-align:center;color:#222"><span style="color:#1414b0">负</span></div>
<div style="left:936px;top:579px;width:38px;height:25px;line-height:25px;text-align:center;color:#222"><span style="color:#1414b0">输</span></div>
<div style="left:975px;top:579px;width:57px;height:25px;line-height:25px;text-align:center;color:#222"><span style="color:#1414b0">小</span></div>
<div style="left:87px;top:605px;width:75px;height:25px;line-height:25px;text-align:center;color:#222">24-10-24</div>
<div style="left:163px;top:605px;width:110px;height:25px;line-height:25px;text-align:center;color:#222"><span style="color:#187418">马德里竞技</span></div>
<div style="left:274px;top:605px;width:89px;height:25px;line-height:25px;text-align:center;color:#222"><span style="color:#c0101c">1-3</span>(1-0)</div>
<div style="left:364px;top:605px;width:38px;height:25px;line-height:25px;text-align:center;color:#222">6-5</div>
<div style="left:403px;top:605px;width:111px;height:25px;line-height:25px;text-align:center;color:#222">里尔</div>
<div style="left:515px;top:605px;width:47px;height:25px;line-height:25px;text-align:center;color:#222">1.04</div>
<div style="left:563px;top:605px;width:83px;height:25px;line-height:25px;text-align:center;color:#222">一/球半</div>
<div style="left:647px;top:605px;width:51px;height:25px;line-height:25px;text-align:center;color:#222">0.85</div>
<div style="left:699px;top:605px;width:69px;height:25px;line-height:25px;text-align:center;color:#222">1.45</div>
<div style="left:769px;top:605px;width:70px;height:25px;line-height:25px;text-align:center;color:#222">4.51</div>
<div style="left:840px;top:605px;width:57px;height:25px;line-height:25px;text-align:center;color:#222">6.99</div>
<div style="left:898px;top:605px;width:37px;height:25px;line-height:25px;text-align:center;color:#222"><span style="color:#1414b0">负</span></div>
<div style="left:936px;top:605px;width:38px;height:25px;line-height:25px;text-align:center;color:#222"><span style="color:#1414b0">输</span></div>
<div style="left:975px;top:605px;width:57px;height:25px;line-height:25px;text-align:center;color:#222"><span style="color:#c0101c">大</span></div>
<div style="left:87px;top:631px;width:75px;height:25px;line-height:25px;text-align:center;color:#222">24-10-20</div>
<div style="left:163px;top:631px;width:110px;height:25px;line-height:25px;text-align:center;color:#222"><span style="color:#187418">马德里竞技</span></div>
<div style="left:274px;top:631px;width:89px;height:25px;line-height:25px;text-align:center;color:#222"><span style="color:#c0101c">3-1</span>(0-1)</div>
<div style="left:364px;top:631px;width:38px;height:25px;line-height:25px;text-align:center;color:#222">8-2</div>
<div style="left:403px;top:631px;width:111px;height:25px;line-height:25px;text-align:center;color:#222">莱加内斯</div>
<div style="left:515px;top:631px;width:47px;height:25px;line-height:25px;text-align:center;color:#222">0.99</div>
<div style="left:563px;top:631px;width:83px;height:25px;line-height:25px;text-align:center;color:#222">一/球半</div>
<div style="left:647px;top:631px;width:51px;height:25px;line-height:25px;text-align:center;color:#222">0.90</div>
<div style="left:699px;top:631px;width:69px;height:25px;line-height:25px;text-align:center;color:#222">1.40</div>
<div style="left:769px;top:631px;width:70px;height:25px;line-height:25px;text-align:center;color:#222">4.45</div>
<div style="left:840px;top:631px;width:57px;height:25px;line-height:25px;text-align:center;color:#222">8.82</div>
<div style="left:898px;top:631px;width:37px;height:25px;line-height:25px;text-align:center;color:#222"><span style="color:#c0101c">胜</span></div>
<div style="left:936px;top:631px;width:38px;height:25px;line-height:25px;text-align:center;color:#222"><span style="color:#c0101c">赢</span></div>
<div style="left:975px;top:631px;width:57px;height:25px;line-height:25px;text-align:center;color:#222"><span style="color:#c0101c">大</span></div>
<div style="left:87px;top:657px;width:75px;height:25px;line-height:25px;text-align:center;color:#222">24-10-07</div>
<div style="left:163px;top:657px;width:110px;height:25px;line-height:25px;text-align:center;color:#222">皇家社会</div>
<div style="left:274px;top:657px;width:89px;height:25px;line-height:25px;text-align:center;color:#222"><span style="color:#c0101c">1-1</span>(0-1)</div>
<div style="left:364px;top:657px;width:38px;height:25px;line-height:25px;text-align:center;color:#222">5-1</div>
<div style="left:403px;top:657px;width:111px;height:25px;line-height:25px;text-align:center;color:#222"><span style="color:#187418">马德里竞技</span></div>
<div style="left:515px;top:657px;width:47px;height:25px;line-height:25px;text-align:center;color:#222">0.95</div>
<div style="left:563px;top:657px;width:83px;height:25px;line-height:25px;text-align:center;color:#222">平手</div>
<div style="left:647px;top:657px;width:51px;height:25px;line-height:25px;text-align:center;color:#222">0.94</div>
<div style="left:699px;top:657px;width:69px;height:25px;line-height:25px;text-align:center;color:#222">2.83</div>
<div style="left:769px;top:657px;width:70px;height:25px;line-height:25px;text-align:center;color:#222">3.06</div>
<div style="left:840px;top:657px;width:57px;height:25px;line-height:25px;text-align:center;color:#222">2.67</div>
<div style="left:898px;top:657px;width:37px;height:25px;line-height:25px;text-align:center;color:#222"><span style="color:#187418">平</span></div>
<div style="left:936px;top:657px;width:38px;height:25px;line-height:25px;text-align:center;color:#222"><span style="color:#187418">走</span></div>
<div style="left:975px;top:657px;width:57px;height:25px;line-height:25px;text-align:center;color:#222"><span style="color:#187418">走</span></div>
<div style="left:87px;top:683px;width:75px;height:25px;line-height:25px;text-align:center;color:#222">24-10-03</div>
<div style="left:163px;top:683px;width:110px;height:25px;line-height:25px;text-align:center;color:#222">本菲卡</div>
<div style="left:274px;top:683px;width:89px;height:25px;line-height:25px;text-align:center;color:#222"><span style="color:#c0101c">4-0</span>(1-0)</div>
<div style="left:364px;top:683px;width:38px;height:25px;line-height:25px;text-align:center;color:#222">4-2</div>
<div style="left:403px;top:683px;width:111px;height:25px;line-height:25px;text-align:center;color:#222"><span style="color:#187418">马德里竞技</span></div>
<div style="left:515px;top:683px;width:47px;height:25px;line-height:25px;text-align:center;color:#222">0.93</div>
<div style="left:563px;top:683px;width:83px;height:25px;line-height:25px;text-align:center;color:#222">平手</div>
<div style="left:647px;top:683px;width:51px;height:25px;line-height:25px;text-align:center;color:#222">0.96</div>
<div style="left:699px;top:683px;width:69px;height:25px;line-height:25px;text-align:center;color:#222">2.65</div>
<div style="left:769px;top:683px;width:70px;height:25px;line-height:25px;text-align:center;color:#222">3.33</div>
<div style="left:840px;top:683px;width:57px;height:25px;line-height:25px;text-align:center;color:#222">2.68</div>
<div style="left:898px;top:683px;width:37px;height:25px;line-height:25px;text-align:center;color:#222"><span style="color:#1414b0">负</span></div>
<div style="left:936px;top:683px;width:38px;height:25px;line-height:25px;text-align:center;color:#222"><span style="color:#1414b0">输</span></div>
<div style="left:975px;top:683px;width:57px;height:25px;line-height:25px;text-align:center;color:#222"><span style="color:#c0101c">大</span></div>
<div style="left:6px;top:709px;width:1026px;height:25px;line-height:25px;text-align:center;color:#222;letter-spacing:0.2px">近<span style="color:#c0101c">10</span>场,胜6平1负3, 胜率:<span style="color:#c0101c">60%</span> 让胜率:<span style="color:#c0101c">40%</span> 大率:<span style="color:#c0101c">40%</span> 单率:<span style="color:#c0101c">40%</span></div>
<div style="left:409px;top:36px;width:14px;height:22px;line-height:22px;color:#222">近</div>
<div style="left:425px;top:38px;width:38px;height:17px;background:#fff;border:1px solid #767676;border-radius:1.5px"></div>
<div style="left:431px;top:39px;width:32px;height:17px;line-height:17px;font-size:12px;font-family:"Liberation Mono",monospace;color:#000">10</div>
<div style="left:448px;top:43px;width:10px;height:7px;"><svg width="10" height="7" viewBox="0 0 10 7"><path d="M0.9 1.1 L4.7 4.9 L8.5 1.1" stroke="#000" stroke-width="2.1" fill="none"/></svg></div>
<div style="left:467px;top:36px;width:14px;height:22px;line-height:22px;color:#222">场</div>
<div style="left:483px;top:38px;width:13px;height:13px;"><svg width="13" height="13" viewBox="0 0 13 13"><rect x="0.5" y="0.5" width="12" height="12" rx="2" fill="#fff" stroke="#767676" stroke-width="1"/></svg></div>
<div style="left:500px;top:36px;width:30px;height:22px;line-height:22px;color:#222">同主</div>
<div style="left:524px;top:38px;width:13px;height:13px;"><svg width="13" height="13" viewBox="0 0 13 13"><rect x="0" y="0" width="13" height="13" rx="2" fill="#1c74ec"/><path d="M2.8 6.6 L5.3 9.1 L10.3 3.6" stroke="#fff" stroke-width="1.9" fill="none"/></svg></div>
<div style="left:537px;top:36px;width:60px;height:22px;line-height:22px;color:#222">捷甲</div>
<div style="left:561px;top:38px;width:13px;height:13px;"><svg width="13" height="13" viewBox="0 0 13 13"><rect x="0" y="0" width="13" height="13" rx="2" fill="#1c74ec"/><path d="M2.8 6.6 L5.3 9.1 L10.3 3.6" stroke="#fff" stroke-width="1.9" fill="none"/></svg></div>
<div style="left:574px;top:36px;width:60px;height:22px;line-height:22px;color:#222">欧冠杯</div>
<div style="left:610px;top:38px;width:13px;height:13px;"><svg width="13" height="13" viewBox="0 0 13 13"><rect x="0" y="0" width="13" height="13" rx="2" fill="#1c74ec"/><path d="M2.8 6.6 L5.3 9.1 L10.3 3.6" stroke="#fff" stroke-width="1.9" fill="none"/></svg></div>
<div style="left:623px;top:36px;width:60px;height:22px;line-height:22px;color:#222">捷克杯</div>
<div style="left:659px;top:38px;width:13px;height:13px;"><svg width="13" height="13" viewBox="0 0 13 13"><rect x="0" y="0" width="13" height="13" rx="2" fill="#1c74ec"/><path d="M2.8 6.6 L5.3 9.1 L10.3 3.6" stroke="#fff" stroke-width="1.9" fill="none"/></svg></div>
<div style="left:672px;top:36px;width:60px;height:22px;line-height:22px;color:#222">球会友谊</div>
<div style="left:407px;top:387px;width:14px;height:22px;line-height:22px;color:#222">近</div>
<div style="left:423px;top:389px;width:38px;height:17px;background:#fff;border:1px solid #767676;border-radius:1.5px"></div>
<div style="left:429px;top:390px;width:32px;height:17px;line-height:17px;font-size:12px;font-family:"Liberation Mono",monospace;color:#000">10</div>
<div style="left:446px;top:394px;width:10px;height:7px;"><svg width="10" height="7" viewBox="0 0 10 7"><path d="M0.9 1.1 L4.7 4.9 L8.5 1.1" stroke="#000" stroke-width="2.1" fill="none"/></svg></div>
<div style="left:465px;top:387px;width:14px;height:22px;line-height:22px;color:#222">场</div>
<div style="left:481px;top:389px;width:13px;height:13px;"><svg width="13" height="13" viewBox="0 0 13 13"><rect x="0.5" y="0.5" width="12" height="12" rx="2" fill="#fff" stroke="#767676" stroke-width="1"/></svg></div>
<div style="left:498px;top:387px;width:30px;height:22px;line-height:22px;color:#222">同客</div>
<div style="left:526px;top:389px;width:13px;height:13px;"><svg width="13" height="13" viewBox="0 0 13 13"><rect x="0" y="0" width="13" height="13" rx="2" fill="#1c74ec"/><path d="M2.8 6.6 L5.3 9.1 L10.3 3.6" stroke="#fff" stroke-width="1.9" fill="none"/></svg></div>
<div style="left:539px;top:387px;width:60px;height:22px;line-height:22px;color:#222">西甲</div>
<div style="left:563px;top:389px;width:13px;height:13px;"><svg width="13" height="13" viewBox="0 0 13 13"><rect x="0" y="0" width="13" height="13" rx="2" fill="#1c74ec"/><path d="M2.8 6.6 L5.3 9.1 L10.3 3.6" stroke="#fff" stroke-width="1.9" fill="none"/></svg></div>
<div style="left:576px;top:387px;width:60px;height:22px;line-height:22px;color:#222">欧冠杯</div>
<div style="left:612px;top:389px;width:13px;height:13px;"><svg width="13" height="13" viewBox="0 0 13 13"><rect x="0" y="0" width="13" height="13" rx="2" fill="#1c74ec"/><path d="M2.8 6.6 L5.3 9.1 L10.3 3.6" stroke="#fff" stroke-width="1.9" fill="none"/></svg></div>
<div style="left:625px;top:387px;width:60px;height:22px;line-height:22px;color:#222">西杯</div>
<div style="left:649px;top:389px;width:13px;height:13px;"><svg width="13" height="13" viewBox="0 0 13 13"><rect x="0" y="0" width="13" height="13" rx="2" fill="#1c74ec"/><path d="M2.8 6.6 L5.3 9.1 L10.3 3.6" stroke="#fff" stroke-width="1.9" fill="none"/></svg></div>
<div style="left:662px;top:387px;width:60px;height:22px;line-height:22px;color:#222">球会友谊</div>
<div style="left:565px;top:58px;width:61px;height:19px;background:#fff;border:1px solid #767676;border-radius:1.5px"></div>
<div style="left:570px;top:59px;width:56px;height:19px;line-height:19px;font-size:13.33px;font-family:"Liberation Sans",sans-serif;color:#000">Crow*</div>
<div style="left:612px;top:64px;width:10px;height:7px;"><svg width="10" height="7" viewBox="0 0 10 7"><path d="M0.9 1.1 L4.7 4.9 L8.5 1.1" stroke="#000" stroke-width="2.1" fill="none"/></svg></div>
<div style="left:634px;top:58px;width:51px;height:19px;background:#fff;border:1px solid #767676;border-radius:1.5px"></div>
<div style="left:639px;top:58px;width:46px;height:19px;line-height:19px;font-size:13.33px;font-family:"Liberation Sans",sans-serif;color:#000">终指</div>
<div style="left:671px;top:64px;width:10px;height:7px;"><svg width="10" height="7" viewBox="0 0 10 7"><path d="M0.9 1.1 L4.7 4.9 L8.5 1.1" stroke="#000" stroke-width="2.1" fill="none"/></svg></div>
<div style="left:745px;top:58px;width:69px;height:19px;background:#fff;border:1px solid #767676;border-radius:1.5px"></div>
<div style="left:750px;top:58px;width:64px;height:19px;line-height:19px;font-size:13.33px;font-family:"Liberation Sans",sans-serif;color:#000">平均值</div>
<div style="left:800px;top:64px;width:10px;height:7px;"><svg width="10" height="7" viewBox="0 0 10 7"><path d="M0.9 1.1 L4.7 4.9 L8.5 1.1" stroke="#000" stroke-width="2.1" fill="none"/></svg></div>
<div style="left:821px;top:58px;width:51px;height:19px;background:#fff;border:1px solid #767676;border-radius:1.5px"></div>
<div style="left:826px;top:58px;width:46px;height:19px;line-height:19px;font-size:13.33px;font-family:"Liberation Sans",sans-serif;color:#000">终指</div>
<div style="left:858px;top:64px;width:10px;height:7px;"><svg width="10" height="7" viewBox="0 0 10 7"><path d="M0.9 1.1 L4.7 4.9 L8.5 1.1" stroke="#000" stroke-width="2.1" fill="none"/></svg></div>
<div style="left:942px;top:58px;width:51px;height:19px;background:#fff;border:1px solid #767676;border-radius:1.5px"></div>
<div style="left:947px;top:58px;width:46px;height:19px;line-height:19px;font-size:13.33px;font-family:"Liberation Sans",sans-serif;color:#000">全场</div>
<div style="left:979px;top:64px;width:10px;height:7px;"><svg width="10" height="7" viewBox="0 0 10 7"><path d="M0.9 1.1 L4.7 4.9 L8.5 1.1" stroke="#000" stroke-width="2.1" fill="none"/></svg></div>
<div style="left:546px;top:409px;width:61px;height:19px;background:#fff;border:1px solid #767676;border-radius:1.5px"></div>
<div style="left:551px;top:410px;width:56px;height:19px;line-height:19px;font-size:13.33px;font-family:"Liberation Sans",sans-serif;color:#000">Crow*</div>
<div style="left:593px;top:415px;width:10px;height:7px;"><svg width="10" height="7" viewBox="0 0 10 7"><path d="M0.9 1.1 L4.7 4.9 L8.5 1.1" stroke="#000" stroke-width="2.1" fill="none"/></svg></div>
<div style="left:615px;top:409px;width:51px;height:19px;background:#fff;border:1px solid #767676;border-radius:1.5px"></div>
<div style="left:620px;top:409px;width:46px;height:19px;line-height:19px;font-size:13.33px;font-family:"Liberation Sans",sans-serif;color:#000">终指</div>
<div style="left:652px;top:415px;width:10px;height:7px;"><svg width="10" height="7" viewBox="0 0 10 7"><path d="M0.9 1.1 L4.7 4.9 L8.5 1.1" stroke="#000" stroke-width="2.1" fill="none"/></svg></div>
<div style="left:734px;top:409px;width:69px;height:19px;background:#fff;border:1px solid #767676;border-radius:1.5px"></div>
<div style="left:739px;top:409px;width:64px;height:19px;line-height:19px;font-size:13.33px;font-family:"Liberation Sans",sans-serif;color:#000">平均值</div>
<div style="left:789px;top:415px;width:10px;height:7px;"><svg width="10" height="7" viewBox="0 0 10 7"><path d="M0.9 1.1 L4.7 4.9 L8.5 1.1" stroke="#000" stroke-width="2.1" fill="none"/></svg></div>
<div style="left:811px;top:409px;width:51px;height:19px;background:#fff;border:1px solid #767676;border-radius:1.5px"></div>
<div style="left:816px;top:409px;width:46px;height:19px;line-height:19px;font-size:13.33px;font-family:"Liberation Sans",sans-serif;color:#000">终指</div>
<div style="left:848px;top:415px;width:10px;height:7px;"><svg width="10" height="7" viewBox="0 0 10 7"><path d="M0.9 1.1 L4.7 4.9 L8.5 1.1" stroke="#000" stroke-width="2.1" fill="none"/></svg></div>
<div style="left:939px;top:409px;width:51px;height:19px;background:#fff;border:1px solid #767676;border-radius:1.5px"></div>
<div style="left:944px;top:409px;width:46px;height:19px;line-height:19px;font-size:13.33px;font-family:"Liberation Sans",sans-serif;color:#000">全场</div>
<div style="left:976px;top:415px;width:10px;height:7px;"><svg width="10" height="7" viewBox="0 0 10 7"><path d="M0.9 1.1 L4.7 4.9 L8.5 1.1" stroke="#000" stroke-width="2.1" fill="none"/></svg></div>
</body></html>
